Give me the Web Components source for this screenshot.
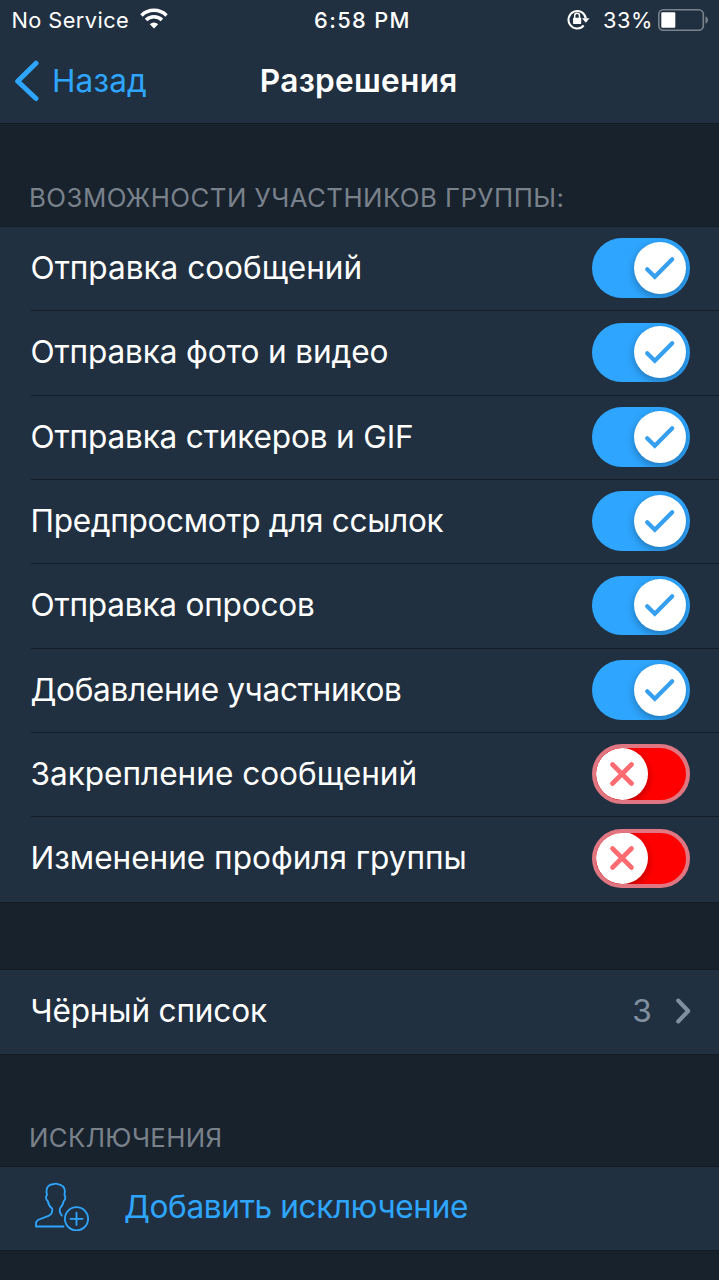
<!DOCTYPE html>
<html lang="ru">
<head>
<meta charset="utf-8">
<title>Разрешения</title>
<style>
html,body{margin:0;background:#18222d}
body{width:719px;height:1280px;overflow:hidden;font-family:Inter,"Open Sans",sans-serif;color:#fff}
</style>
</head>
<body>
<permissions-screen></permissions-screen>
<script>
function define(name, html, ready) {
  const tpl = document.createElement('template');
  tpl.innerHTML = html;
  customElements.define(name, class extends HTMLElement {
    constructor() {
      super();
      this.attachShadow({mode: 'open'}).append(tpl.content.cloneNode(true));
    }
    connectedCallback() { if (ready) ready(this); }
  });
}

/* Text whose tracking is adjusted so that its glyphs span the given width. */
define('tracked-text', `<style>:host{display:block;white-space:pre;flex:none}</style><slot></slot>`, el => {
  const cs = getComputedStyle(el), text = el.textContent;
  const ctx = document.createElement('canvas').getContext('2d');
  ctx.font = `${cs.fontWeight} ${cs.fontSize} ${cs.fontFamily}`;
  const m = ctx.measureText(text);
  const ink = m.actualBoundingBoxLeft + m.actualBoundingBoxRight;
  if (text.length > 1) el.style.letterSpacing = ((+el.getAttribute('span') - ink) / (text.length - 1)).toFixed(3) + 'px';
});

define('status-bar', `<style>
:host{display:grid;grid-template-columns:1fr auto 1fr;height:40px;align-items:center;font-size:21.8px;line-height:40px}
.l,.r{display:flex;align-items:center}
.l{padding-left:11.5px}
.r{justify-content:flex-end;padding-right:10px}
.t{font-weight:550;padding-left:6px}
svg{display:block;flex:none}
.wifi{margin:0 0 2px 11px}
.lock{margin-right:12px;margin-bottom:2px}
.bat{margin-left:5px}
</style>
<div class="l"><tracked-text span="115.5">No Service</tracked-text>
<svg class="wifi" width="28" height="22" viewBox="0 0 28 22" fill="none" stroke="#fff" stroke-width="3.5"><path d="M1.5 7.4a18 18 0 0 1 25 0"/><path d="M6.1 12a11.2 11.2 0 0 1 15.8 0"/><path d="M14 20.5l-4.2-4.3a6 6 0 0 1 8.4 0z" fill="#fff" stroke="none"/></svg></div>
<tracked-text class="t" span="93.5">6:58 PM</tracked-text>
<div class="r"><svg class="lock" width="24" height="22" viewBox="0 0 24 22"><path d="M16.7 17.5A8.7 8.7 0 1 1 18.8 10.5" fill="none" stroke="#fff" stroke-width="2"/><path d="M15 10.2h7.5l-3.7 4.5z" fill="#fff"/><rect x="6" y="9.8" width="8.2" height="6.2" rx=".8" fill="#fff"/><path d="M7.7 10V7.7a2.4 2.4 0 0 1 4.8 0V10" fill="none" stroke="#fff" stroke-width="1.5"/></svg>
<tracked-text span="46">33%</tracked-text>
<svg class="bat" width="51" height="22" viewBox="0 0 51 22"><rect x=".8" y=".8" width="44.5" height="20.4" rx="4.5" fill="none" stroke="#7a838d" stroke-width="1.6"/><rect x="3.3" y="3.3" width="14" height="15.4" rx="1" fill="#fff"/><path d="M47.5 7.3c3.3 1.4 3.3 6 0 7.4z" fill="#7a838d"/></svg></div>`);

define('nav-bar', `<style>
:host{display:grid;grid-template-columns:1fr auto 1fr;height:83px;box-sizing:border-box;padding-bottom:2px;align-items:center;font-size:31.5px;line-height:80px}
.back{display:flex;align-items:center;color:#2ea6ff;padding-left:14px}
svg{display:block;margin-right:13px}
.title{font-weight:600;font-size:31.6px;padding-right:1.5px}
</style>
<div class="back"><svg width="25" height="42" viewBox="0 0 25 42" fill="none" stroke="#2ea6ff" stroke-width="5" stroke-linecap="round" stroke-linejoin="round"><path d="M22 3.2L3.7 21.2 22 38.5"/></svg><tracked-text span="92">Назад</tracked-text></div>
<tracked-text class="title" span="193.5">Разрешения</tracked-text><span></span>`);

define('section-title', `<style>:host{display:flex;align-items:flex-end;box-sizing:border-box;padding:0 0 8px 29px;color:#79818b;font-size:25.8px;line-height:42px}</style><slot></slot>`);

define('cell-group', `<style>:host{display:flex;flex-direction:column;background:#213040;box-shadow:0 -1px #131b24,0 1px #131b24}</style><slot></slot>`);

define('list-row', `<style>
:host{display:flex;height:84.35px;padding-left:30.5px;font-size:31.6px;line-height:78px}
.in{flex:1;display:flex;align-items:center;justify-content:space-between;padding:0 29.3px 1.2px 0;border-bottom:1px solid #141d27}
:host(:last-child) .in{border-color:transparent}
</style><div class="in"><slot></slot><slot name="end"></slot></div>`);

define('toggle-switch', `<style>
:host{display:flex;box-sizing:border-box;width:98px;height:59.5px;border-radius:30px;padding:4px 3.5px;background:#2ea6ff;justify-content:flex-end;align-items:center;overflow:hidden}
.knob{width:52px;height:52px;border-radius:50%;background:#fff;box-shadow:0 3px 9px rgba(0,0,0,.3);flex:none}
:host([off]){background:#f00;border:4px solid #e07681;padding:0;justify-content:flex-start}
svg{display:block}
.x{display:none}
:host([off]) .x{display:block}
:host([off]) .c{display:none}
</style><div class="knob">
<svg class="c" width="52" height="52" viewBox="0 0 52 52" fill="none" stroke="#369ff0" stroke-width="4.2" stroke-linecap="round"><path d="M13.2 27.2L20.8 34.7 38.2 17.2"/></svg>
<svg class="x" width="52" height="52" viewBox="0 0 52 52" fill="none" stroke="#fb6b71" stroke-width="4.6" stroke-linecap="round"><path d="M16.5 16.5L35.5 35.5M35.5 16.5L16.5 35.5"/></svg></div>`);

define('row-detail', `<style>:host{display:flex;align-items:center;color:#8090a0;margin-right:-1px}svg{display:block;margin-left:23px}</style>
<slot></slot><svg width="16" height="28" viewBox="0 0 16 28" fill="none" stroke="#8090a0" stroke-width="4" stroke-linecap="round" stroke-linejoin="round"><path d="M3.2 3.5L13.2 14 3.2 24.5"/></svg>`);

define('add-exception', `<style>
:host{display:flex;align-items:center;box-sizing:border-box;height:83.4px;padding:0 0 4px 34px;color:#2ea6ff;font-size:31.6px;line-height:78px}
svg{display:block;margin:0 34px 2px 0}
</style>
<svg width="56" height="50" viewBox="0 0 56 50" fill="none" stroke="#2ea6ff" stroke-width="1.8" stroke-linecap="round" stroke-linejoin="round"><path d="M29.5 45.5H2V42.5Q2 39.8 5 38.5L14.5 34.8Q18.2 33.2 18.2 29.5V27.6Q14.5 24.5 13.8 20Q11.8 18.8 12 16.3Q12.1 15 13 14.2C11 6 15.5 2.8 19.5 3.3Q21.5 1.9 24.5 3.4C30 4.3 32 8.5 30.5 14.4Q31.4 15.3 31.3 16.8Q31.2 19.2 29.8 20Q29 24 26 27.5Q24.8 30.5 27.8 34.6"/><circle cx="42.5" cy="37.8" r="11.6"/><path d="M42.5 31.7v12.2M36.4 37.8h12.2"/></svg>
<slot></slot>`);

define('permissions-screen', `<style>
:host{display:flex;flex-direction:column;width:719px;height:1280px;background:#18222d}
header{background:#213040;box-shadow:0 1px #131b24;display:flex;flex-direction:column}
.a{height:104px}
.b{margin-top:68px}
.c{height:113px}
</style>
<header><status-bar></status-bar><nav-bar></nav-bar></header>
<section-title class="a"><tracked-text span="531.5">ВОЗМОЖНОСТИ УЧАСТНИКОВ ГРУППЫ:</tracked-text></section-title>
<cell-group>
<list-row><tracked-text span="329">Отправка сообщений</tracked-text><toggle-switch slot="end"></toggle-switch></list-row>
<list-row><tracked-text span="356">Отправка фото и видео</tracked-text><toggle-switch slot="end"></toggle-switch></list-row>
<list-row><tracked-text span="380.5">Отправка стикеров и GIF</tracked-text><toggle-switch slot="end"></toggle-switch></list-row>
<list-row><tracked-text span="411">Предпросмотр для ссылок</tracked-text><toggle-switch slot="end"></toggle-switch></list-row>
<list-row><tracked-text span="282.5">Отправка опросов</tracked-text><toggle-switch slot="end"></toggle-switch></list-row>
<list-row><tracked-text span="369.5">Добавление участников</tracked-text><toggle-switch slot="end"></toggle-switch></list-row>
<list-row><tracked-text span="384">Закрепление сообщений</tracked-text><toggle-switch slot="end" off></toggle-switch></list-row>
<list-row><tracked-text span="432">Изменение профиля группы</tracked-text><toggle-switch slot="end" off></toggle-switch></list-row>
</cell-group>
<cell-group class="b"><list-row><tracked-text span="234.5">Чёрный список</tracked-text><row-detail slot="end">3</row-detail></list-row></cell-group>
<section-title class="c"><tracked-text span="189.5">ИСКЛЮЧЕНИЯ</tracked-text></section-title>
<cell-group><add-exception><tracked-text span="342">Добавить исключение</tracked-text></add-exception></cell-group>`);
</script>
</body>
</html>
